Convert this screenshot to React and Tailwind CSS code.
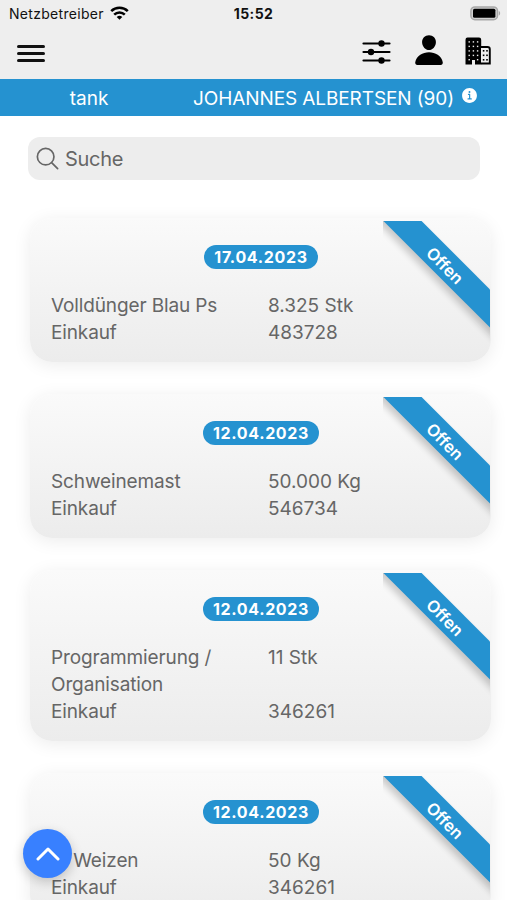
import { IoInformationCircle, IoPerson, IoSearchOutline } from 'react-icons/io5';

const orders = [
    { date: '17.04.2023', article: 'Volldünger Blau Ps', amount: '8.325 Stk', type: 'Einkauf', number: '483728' },
    { date: '12.04.2023', article: 'Schweinemast', amount: '50.000 Kg', type: 'Einkauf', number: '546734' },
    { date: '12.04.2023', article: 'Programmierung / Organisation', amount: '11 Stk', type: 'Einkauf', number: '346261' },
    { date: '12.04.2023', article: 'M Weizen', amount: '50 Kg', type: 'Einkauf', number: '346261' },
];

function WifiIcon() {
    return (
        <svg className="mb-[2px] w-[19px] h-[14px]" viewBox="0 0 19 14" fill="none" stroke="black" strokeWidth="2.5">
            <path d="M1.2 5.2a11.8 11.8 0 0 1 16.6 0" />
            <path d="M4.2 8.6a7.5 7.5 0 0 1 10.6 0" />
            <path d="M9.5 13.8 6.7 11a4 4 0 0 1 5.6 0Z" fill="black" stroke="none" />
        </svg>
    );
}

function BatteryIcon() {
    return (
        <svg className="w-[31px] h-[15px]" viewBox="0 0 31 15">
            <rect x="0.9" y="0.9" width="26.6" height="12.8" rx="4" fill="#d0d0d0" stroke="#a8a8a8" strokeWidth="1.5" />
            <rect x="3" y="2.8" width="22.400" height="9" rx="1.5" fill="black" />
            <path d="M28.8 5v4.6c1.8-.7 1.8-3.9 0-4.6Z" fill="#a8a8a8" />
        </svg>
    );
}

function FilterIcon() {
    return (
        <svg className="h-6 w-[29px]" viewBox="0 0 29 24" stroke="black" strokeWidth="2.2" strokeLinecap="round">
            <path d="M1.500 3.500h26M1.500 12h26M1.500 20.500h26" />
            <g fill="black" stroke="none">
                <circle cx="19.500" cy="3.500" r="3.2" />
                <circle cx="9" cy="12" r="3.2" />
                <circle cx="19.500" cy="20.500" r="3.2" />
            </g>
        </svg>
    );
}

function BuildingIcon() {
    return (
        <svg className="w-[26px] h-[28px]" viewBox="0 0 26 28">
            <path d="M2.500 .5h11.500q2.200 0 2.200 2.200v24.800H10v-4.500H7v4.500H.5V2.700Q.5.5 2.500.5Z" fill="black" />
            <path d="M16 10h6.500q2.300 0 2.300 2.300v14.200H16" fill="#eeeeee" stroke="black" strokeWidth="1.9" />
            {[4.2, 8.7, 13.2, 17.7].map((y) => (
                <g key={y} fill="#eeeeee">
                    <rect x="3.500" y={y} width="1.4" height="1.4" />
                    <rect x="7.700" y={y} width="1.4" height="1.4" />
                    <rect x="11.900" y={y} width="1.4" height="1.4" />
                </g>
            ))}
            <rect x="3.500" y="22" width="1.4" height="1.4" fill="#eeeeee" />
            <rect x="11.900" y="22" width="1.4" height="1.4" fill="#eeeeee" />
            {[13, 17.5, 22].map((y) => (
                <g key={y} fill="black">
                    <rect x="17.800" y={y} width="1.6" height="1.6" />
                    <rect x="21.200" y={y} width="1.6" height="1.6" />
                </g>
            ))}
        </svg>
    );
}

function OrderCard({ order }) {
    return (
        <div className="relative rounded-[22px] bg-linear-to-b from-[#fafafa] to-[#ececec] pt-[27px] pb-4 pl-[21px] shadow-[0_3px_18px_rgba(0,0,0,0.08)]">
            {/* Status ribbon */}
            <div className="absolute top-[3px] right-px h-[130px] w-[107px] overflow-hidden">
                <div className="absolute top-[30px] -left-[37px] flex h-[27px] w-[200px] rotate-45 items-center justify-center bg-[#2592d0] pt-[4px] text-[16.5px] font-semibold text-white shadow-[0_5px_7px_rgba(0,0,0,0.2)]">
                    Offen
                </div>
            </div>

            <div className="flex justify-center pr-[20px]">
                <span className="flex h-6 items-center rounded-full bg-[#2592d0] px-[10px] text-[16px] font-bold tracking-[0.65px] text-white">
                    {order.date}
                </span>
            </div>

            <div className="mt-[23px] grid grid-cols-[217px_1fr] text-[19px] leading-[27px] tracking-[-0.13px] text-[#666666]">
                <span className="pr-8">{order.article}</span>
                <span className="tracking-normal">{order.amount}</span>
                <span>{order.type}</span>
                <span className="tracking-normal">{order.number}</span>
            </div>
        </div>
    );
}

export default function App() {
    return (
        <div className="relative h-[900px] w-[507px] overflow-hidden bg-white font-['Inter','Liberation_Sans',sans-serif]">
            <header className="bg-[#eeeeee]">
                {/* Phone status bar */}
                <div className="grid h-[27px] grid-cols-3 items-center px-[6px] text-[14px] text-[#111111]">
                    <div className="flex items-center gap-[6px] pl-[3px]">
                        <span className="whitespace-nowrap tracking-[0.3px]">Netzbetreiber</span>
                        <WifiIcon />
                    </div>
                    <span className="text-center font-bold tracking-[0.4px]">15:52</span>
                    <div className="flex justify-end">
                        <BatteryIcon />
                    </div>
                </div>

                {/* Toolbar */}
                <div className="flex h-[52px] items-center justify-between pr-4 pl-[17px]">
                    <button className="flex w-7 flex-col gap-1">
                        <span className="h-[3px] rounded-full bg-[#111111]" />
                        <span className="h-[3px] rounded-full bg-[#111111]" />
                        <span className="h-[3px] rounded-full bg-[#111111]" />
                    </button>
                    <div className="flex items-center">
                        <div className="mr-[21px] pb-[2px]">
                            <FilterIcon />
                        </div>
                        <IoPerson className="mr-[19px] mb-[6px] size-[34px]" />
                        <div className="pb-[5px]">
                            <BuildingIcon />
                        </div>
                    </div>
                </div>
            </header>

            <div className="flex h-[37px] items-center bg-[#2592d0] text-[19px] text-white">
                <span className="w-[178px] pt-[3px] text-center">tank</span>
                <span className="ml-[15px] pt-[3px] tracking-[-0.1px] whitespace-nowrap">JOHANNES ALBERTSEN (90)</span>
                <IoInformationCircle className="mb-1 ml-[6px] size-[19px]" />
            </div>

            <main className="px-[30px] pt-[21px]">
                <div className="-ml-[2px] flex h-[43px] w-[452px] items-center gap-[4px] rounded-xl bg-[#ededed] pl-[6px] text-[20px] tracking-[-0.3px] text-[#666666]">
                    <IoSearchOutline className="size-[27px]" />
                    <span>Suche</span>
                </div>

                <div className="mt-[38px] -mr-[14px] flex flex-col gap-8">
                    {orders.map((order) => (
                        <OrderCard key={order.date + order.article} order={order} />
                    ))}
                </div>
            </main>

            {/* Scroll to top */}
            <button className="absolute top-[829px] left-[23px] flex size-[49px] items-center justify-center rounded-full bg-[#3880ff] shadow-[0_4px_12px_rgba(0,0,0,0.2)]">
                <svg className="h-[14px] w-6" viewBox="0 0 24 14" fill="none" stroke="white" strokeWidth="3" strokeLinecap="round" strokeLinejoin="round">
                    <path d="M2 12 12 2l10 10" />
                </svg>
            </button>
        </div>
    );
}
